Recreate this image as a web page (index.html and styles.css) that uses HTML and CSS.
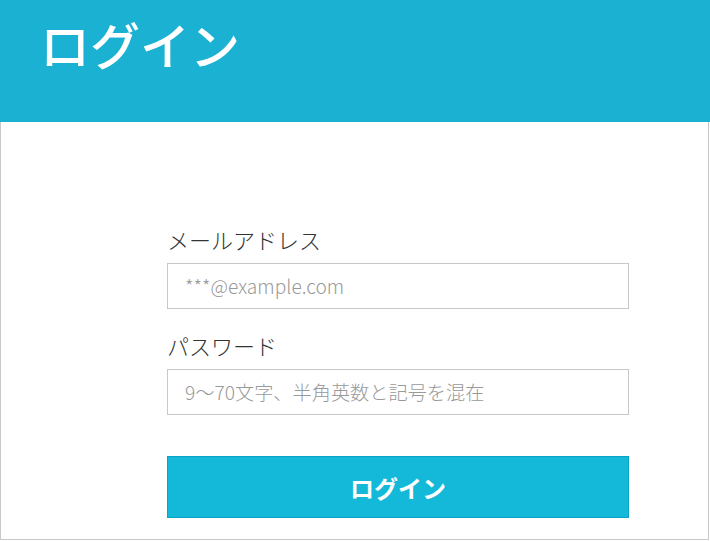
FILE: index.html
```html
<!DOCTYPE html>
<html lang="ja">
<head>
    <meta charset="UTF-8">
    <meta name="viewport" content="width=device-width, initial-scale=1.0">
    <title>ログイン</title>
    <link rel="stylesheet" href="styles.css">
</head>
<body>
    <header class="page-header">
        <h1 class="page-title">ログイン</h1>
    </header>
    <main class="login-card">
        <form class="login-form" onsubmit="return false;">
            <label class="field-label" for="email">メールアドレス</label>
            <input class="field-input" id="email" type="email" placeholder="***@example.com">
            <label class="field-label" for="password">パスワード</label>
            <input class="field-input" id="password" type="password" placeholder="9～70文字、半角英数と記号を混在">
            <button class="login-button" type="submit">ログイン</button>
        </form>
    </main>
</body>
</html>
```

FILE: styles.css
```css
body {
    margin: 0;
    background-color: white;
    color: #333;
    font-family: "Noto Sans CJK JP", "Noto Sans", sans-serif;
}
.page-header {
    background-color: #1bb1d3;
    height: 122px;
    padding-left: 40px;
    box-sizing: border-box;
}
.page-title {
    margin: 0;
    padding-top: 8px;
    color: white;
    font-size: 50px;
    font-weight: 500;
    line-height: 1.4;
}
.login-card {
    width: 709px;
    height: 418px;
    box-sizing: border-box;
    border: 1px solid #c8c8c8;
    border-top: none;
    padding-top: 102px;
    padding-left: 166px;
}
.login-form {
    width: 462px;
    display: flex;
    flex-direction: column;
}
.field-label {
    font-size: 22px;
    font-weight: 300;
    line-height: 30px;
    margin-bottom: 9px;
}
.field-input {
    height: 46px;
    box-sizing: border-box;
    border: 1px solid #c8c8c8;
    padding: 0 17px;
    font-family: inherit;
    font-size: 19.2px;
    font-weight: 300;
    color: #333;
    margin-bottom: 21px;
}
.field-input::placeholder {
    color: #999;
}
.login-button {
    margin-top: 20px;
    height: 62px;
    background-color: #14b8d8;
    border: 1px solid #0aa3c3;
    color: white;
    font-family: inherit;
    font-size: 24px;
    font-weight: bold;
    cursor: pointer;
}
```
